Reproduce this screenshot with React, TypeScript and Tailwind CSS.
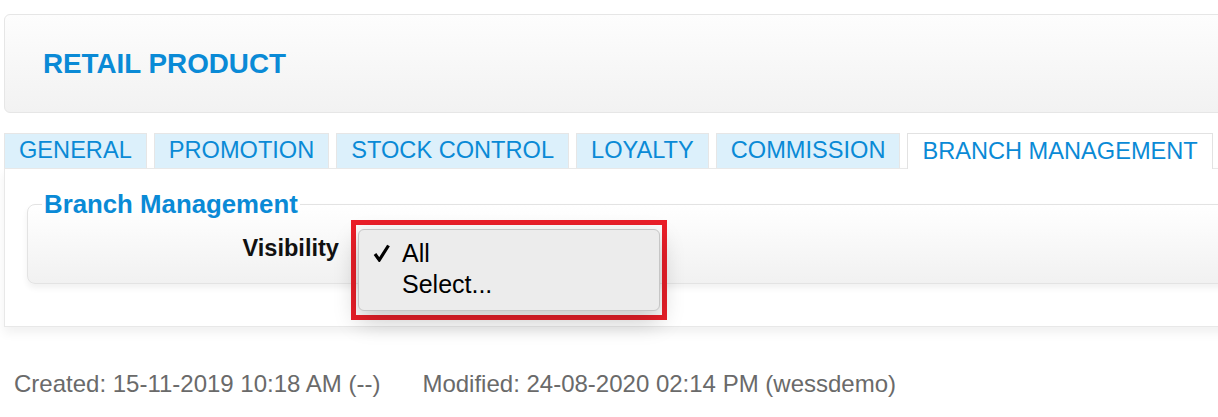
import React from "react";

const tabs = ["GENERAL", "PROMOTION", "STOCK CONTROL", "LOYALTY", "COMMISSION"];

export default function App() {
  return (
    <div className="w-[1218px] h-[417px] overflow-hidden bg-white font-['Liberation_Sans',Arial,sans-serif]">
      {/* Header */}
      <div className="ml-[4px] mt-[14px] w-[1240px] h-[99px] rounded-[6px] border border-[#e6e6e6] bg-gradient-to-b from-[#fdfdfd] to-[#f2f2f2] flex items-center pl-[38px]">
        <h1 className="text-[27.8px] font-bold text-[#0a8ad6] leading-none">RETAIL PRODUCT</h1>
      </div>

      {/* Tabs */}
      <div className="ml-[4px] mt-[20px] flex items-end gap-[7px] relative z-10">
        {tabs.map((t) => (
          <div
            key={t}
            className="h-[35px] px-[14px] flex items-center border border-b-0 border-[#e6e6e6] bg-[#dcf0fb] text-[23.6px] text-[#0a8ad6] leading-none"
          >
            {t}
          </div>
        ))}
        <div className="h-[36px] -mb-px px-[14px] flex items-center border border-b-0 border-[#e2e2e2] bg-white text-[23.6px] text-[#0a8ad6] leading-none">
          BRANCH MANAGEMENT
        </div>
      </div>

      {/* Content panel */}
      <div className="relative ml-[4px] w-[1240px] h-[159px] border border-[#e8e8e8] bg-white shadow-[0_6px_10px_rgba(0,0,0,0.06)] pl-[22px] pt-[22px]">
        <fieldset className="w-[1220px] rounded-[8px] border border-[#e3e3e3] bg-gradient-to-b from-[#ffffff] to-[#f1f1f1] shadow-[0_4px_6px_rgba(0,0,0,0.06)]">
          <legend className="ml-[14px] px-[2px] text-[25.8px] leading-[26px] font-bold text-[#0a8ad6]">
            Branch Management
          </legend>
          <div className="h-[66px] flex items-center">
            <div className="w-[311px] text-right text-[23.6px] font-bold text-[#111] leading-[28px] -mt-[4px]">
              Visibility
            </div>
          </div>
        </fieldset>

        {/* Popup menu overlay */}
        <div className="absolute left-[346px] top-[51px] w-[316px] h-[100px] border-[5px] border-[#ea1f29] pl-[2px] pt-[4px]">
          <div className="w-[302px] h-[82px] rounded-[6px] border border-[#c6c6c6] bg-[#ececec] shadow-[0_10px_24px_rgba(0,0,0,0.22)] pt-[8px]">
            <div className="flex items-center h-[30px] text-[25px] text-black leading-none">
              <span className="w-[43px] flex justify-end pr-[12px]">
                <svg width="17" height="18" viewBox="0 0 17 18">
                  <path d="M2 10 L6.3 16 L15.5 1.5" fill="none" stroke="#000" strokeWidth="3.2" strokeLinejoin="miter" />
                </svg>
              </span>
              <span>All</span>
            </div>
            <div className="flex items-center h-[33px] text-[25px] text-black leading-none">
              <span className="w-[43px]" />
              <span>Select...</span>
            </div>
          </div>
        </div>
      </div>

      {/* Footer */}
      <div className="ml-[14px] mt-[43px] flex gap-[42px] text-[24px] text-[#6a6a6a] leading-[28px]">
        <span>Created: 15-11-2019 10:18 AM (--)</span>
        <span>Modified: 24-08-2020 02:14 PM (wessdemo)</span>
      </div>
    </div>
  );
}
